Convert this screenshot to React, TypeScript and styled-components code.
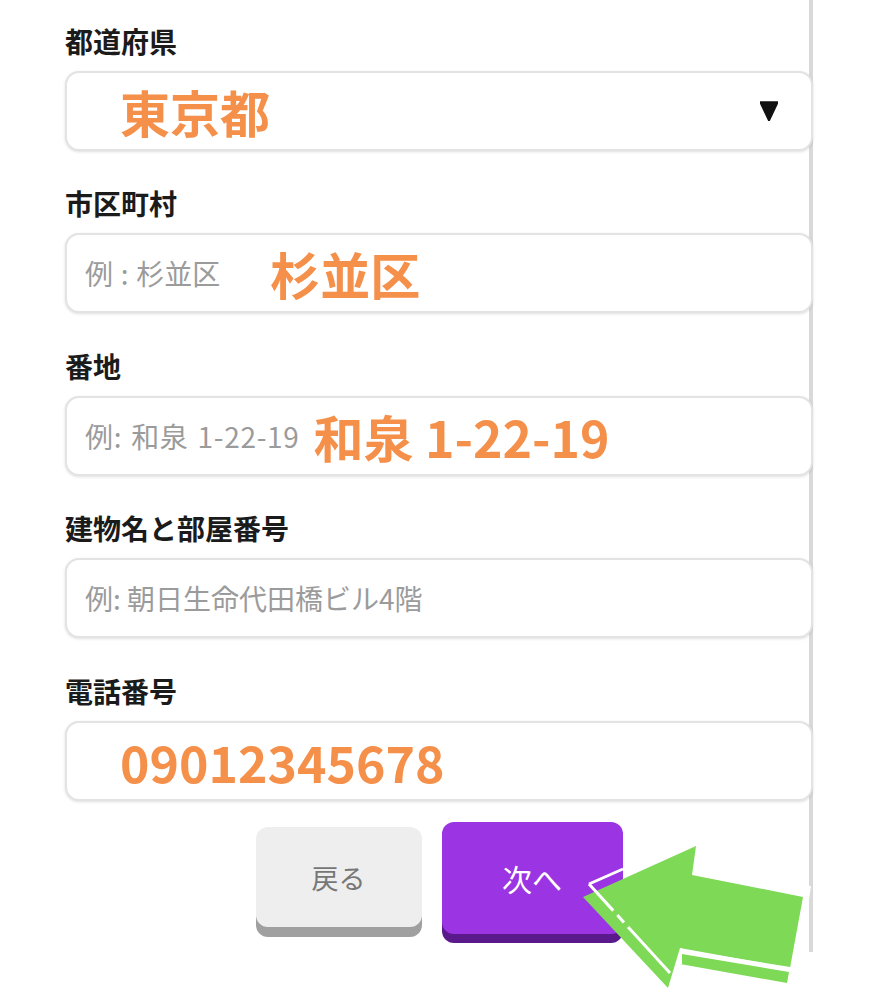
import React from "react";
import styled, { createGlobalStyle } from "styled-components";

const GlobalStyle = createGlobalStyle`
  html, body { margin: 0; padding: 0; background: #ffffff; }
  body { font-family: "Noto Sans CJK JP", "Noto Sans", sans-serif; }
  * { box-sizing: border-box; }
`;

const Page = styled.div`
  position: relative;
  width: 880px;
  height: 1000px;
  overflow: hidden;
  background: #ffffff;
`;

const Panel = styled.div`
  width: 813px;
  padding: 23.5px 0 9px 65px;
  border-right: 4px solid #d9d9d9;
`;

const Form = styled.div`
  display: flex;
  flex-direction: column;
  gap: 35.5px;
  margin-right: -4px;
`;

const Field = styled.div`
  display: flex;
  flex-direction: column;
  gap: 13px;
`;

const Label = styled.div`
  font-size: 28px;
  line-height: 34px;
  font-weight: 700;
  color: #1b1b1b;
`;

const Box = styled.div<{ $indent: number }>`
  display: flex;
  align-items: center;
  height: 80px;
  padding: 0 33px 0 ${(p) => p.$indent}px;
  border: 2px solid #e3e3e3;
  border-radius: 14px;
  background: #ffffff;
  box-shadow: 0 1px 3px rgba(0, 0, 0, 0.13);
`;

const Placeholder = styled.span<{ $spread?: number; $track?: number }>`
  font-size: 28px;
  line-height: 1;
  color: #9b9b9b;
  white-space: pre;
  word-spacing: ${(p) => p.$spread ?? 0}px;
  letter-spacing: ${(p) => p.$track ?? 0}px;
`;

const Value = styled.span<{ $gap?: number }>`
  margin-left: ${(p) => p.$gap ?? 0}px;
  font-size: 50px;
  line-height: 1;
  font-weight: 700;
  color: #f5904b;
  white-space: pre;
`;

const Caret = styled.svg`
  margin-left: auto;
  width: 18px;
  height: 20px;
`;

const ButtonRow = styled.div`
  display: flex;
  justify-content: center;
  align-items: center;
  gap: 20px;
  margin: 21px -4px 0 0;
`;

const Button = styled.div<{ $w: number; $h: number; $face: string; $edge: string; $depth: number; $ink: string; $size: number }>`
  display: flex;
  align-items: center;
  justify-content: center;
  width: ${(p) => p.$w}px;
  height: ${(p) => p.$h}px;
  margin-bottom: ${(p) => p.$depth}px;
  border-radius: 12px;
  background: ${(p) => p.$face};
  box-shadow: 0 ${(p) => p.$depth}px 0 ${(p) => p.$edge};
  color: ${(p) => p.$ink};
  font-size: ${(p) => p.$size}px;
`;

const Overlay = styled.svg`
  position: absolute;
  left: 0;
  top: 0;
  width: 880px;
  height: 1000px;
  pointer-events: none;
`;

export default function App() {
  return (
    <>
      <GlobalStyle />
      <Page>
        <Panel>
          <Form>
            <Field>
              <Label>都道府県</Label>
              <Box $indent={53}>
                <Value>東京都</Value>
                <Caret viewBox="0 0 18 20">
                  <polygon points="0,1 18,1 9,20" fill="#111" strokeLinejoin="round" stroke="#111" strokeWidth="1.5" />
                </Caret>
              </Box>
            </Field>
            <Field>
              <Label>市区町村</Label>
              <Box $indent={18}>
                <Placeholder $spread={1.5}>例 : 杉並区</Placeholder>
                <Value $gap={50}>杉並区</Value>
              </Box>
            </Field>
            <Field>
              <Label>番地</Label>
              <Box $indent={18}>
                <Placeholder $spread={2} $track={0.7}>例: 和泉 1-22-19</Placeholder>
                <Value $gap={14}>和泉 1-22-19</Value>
              </Box>
            </Field>
            <Field>
              <Label>建物名と部屋番号</Label>
              <Box $indent={18}>
                <Placeholder>例: 朝日生命代田橋ビル4階</Placeholder>
              </Box>
            </Field>
            <Field>
              <Label>電話番号</Label>
              <Box $indent={53}>
                <Value>09012345678</Value>
              </Box>
            </Field>
          </Form>
          <ButtonRow>
            <Button $w={166} $h={100} $face="#eeeeee" $edge="#a0a0a0" $depth={10} $ink="#777777" $size={27}>
              戻る
            </Button>
            <Button $w={181} $h={112} $face="#9b35e3" $edge="#5a1a8c" $depth={9} $ink="#ffffff" $size={30}>
              次へ
            </Button>
          </ButtonRow>
        </Panel>
        <Overlay viewBox="0 0 880 1000">
          <polygon points="583,897 696,846 692,875 803,897 790,968 680,948 668,988" fill="#7ed957" />
          <polygon points="682,954 789,972 787,983 680,964" fill="#7ed957" />
          <polyline points="682,951 793,969" stroke="#ffffff" strokeWidth="3" fill="none" />
          <polyline points="681,948 681,964" stroke="#ffffff" strokeWidth="2" fill="none" />
          <polyline points="623,869 589,884" stroke="#ffffff" strokeWidth="3" fill="none" />
          <polyline points="589,884 670,973" stroke="#ffffff" strokeWidth="3" fill="none" strokeDasharray="36 6 10 6 200" />
          <polyline points="810,886 807,906" stroke="#ffffff" strokeWidth="2" fill="none" />
        </Overlay>
      </Page>
    </>
  );
}
